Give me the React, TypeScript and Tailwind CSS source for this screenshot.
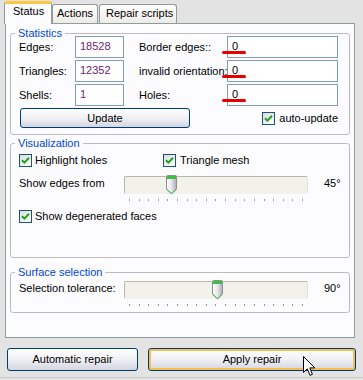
import React from 'react';

const CheckBox = () => (
  <span className="w-[13px] h-[13px] shrink-0 border border-[#1c5180] bg-linear-to-br from-[#dcdcd7] to-white flex items-center justify-center">
    <svg width="9" height="9" viewBox="0 0 9 9">
      <path d="M1 4.2 L3.4 6.6 L8 1.8" stroke="#21a121" strokeWidth="2" fill="none" />
    </svg>
  </span>
);

const Check = ({ label, className = '' }: { label: string; className?: string }) => (
  <div className={`flex items-center gap-[3px] whitespace-nowrap ${className}`}>
    <CheckBox />
    <span>{label}</span>
  </div>
);

const Group = ({ title, className = '', children }: { title: string; className?: string; children: React.ReactNode }) => (
  <div className={`border border-[#bdbdbd] rounded-[3px] ${className}`}>
    <div className="-mt-[7px] ml-[4px] w-fit px-[3px] bg-[#fcfcfe] text-[#0046d5]">{title}</div>
    {children}
  </div>
);

const Field = ({ value, className = '', color = 'text-black' }: { value: string; className?: string; color?: string }) => (
  <div className={`h-[22px] shrink-0 border border-[#7f9db9] bg-white pl-[4px] pt-[3px] ${color} ${className}`}>{value}</div>
);

const Thumb = () => (
  <svg width="11" height="20" viewBox="0 0 11 20">
    <defs>
      <linearGradient id="tg" x1="0" x2="1" y1="0" y2="0">
        <stop offset="0" stopColor="#ffffff" />
        <stop offset="0.5" stopColor="#e6e6ec" />
        <stop offset="1" stopColor="#a9a9b4" />
      </linearGradient>
    </defs>
    <path d="M1.5 0.5 H9.5 Q10.5 0.5 10.5 1.5 V14 L5.5 19 L0.5 14 V1.5 Q0.5 0.5 1.5 0.5 Z" fill="url(#tg)" stroke="#8d8d96" />
    <rect x="1" y="1" width="9" height="3" fill="#3cc13c" />
    <path d="M0.8 14.2 L5.5 18.6 L10.2 14.2" stroke="#4db84d" fill="none" />
  </svg>
);

const ticks = Array.from({ length: 19 }, (_, i) => i);

const Slider = ({ thumbClass }: { thumbClass: string }) => (
  <div className="w-[184px] shrink-0">
    <div className="relative h-[18px] rounded-[2px] border border-t-[#b9b8ad] border-l-[#b9b8ad] border-r-[#e2e1d8] border-b-[#f3f2ea] bg-[#f3f2ea]">
      <div className={`absolute -top-[2px] ${thumbClass}`}>
        <Thumb />
      </div>
    </div>
    <div className="mt-[5px] h-[2px] px-[5px] flex justify-between">
      {ticks.map((t) => (
        <span key={t} className="w-px h-[2px] bg-[#9a9a9a]" />
      ))}
    </div>
  </div>
);

const XpButton = ({ label, className = '', focus = false }: { label: string; className?: string; focus?: boolean }) => (
  <div
    className={`rounded-[3px] border border-[#003c74] bg-linear-to-b from-white via-[#f1f1f5] to-[#d4d4e0] flex items-center justify-center ${
      focus ? 'shadow-[inset_0_0_0_2px_#f6bd52]' : ''
    } ${className}`}
  >
    {label}
  </div>
);

export default function App() {
  return (
    <div className="relative w-[363px] h-[380px] overflow-hidden bg-[#e3e3e3] font-['Liberation_Sans',Arial,sans-serif] text-[11px] leading-[13px] text-black">
      {/* Tabs */}
      <div className="flex items-end h-[23px] pl-[4px]">
        <div className="relative z-10 -mb-px h-[23px] w-[48px] rounded-t-[3px] border-x border-[#919b9c] border-t-[3px] border-t-[#ffc83c] bg-[#fcfcfe] pt-[1px] pl-[8px]">
          Status
        </div>
        <div className="h-[19px] w-[46px] rounded-t-[3px] border-x border-t border-[#919b9c] bg-linear-to-b from-white to-[#ecebe6] pt-[2px] pl-[4px]">
          Actions
        </div>
        <div className="ml-[1px] h-[19px] w-[78px] rounded-t-[3px] border-x border-t border-[#919b9c] bg-linear-to-b from-white to-[#ecebe6] pt-[2px] pl-[6px]">
          Repair scripts
        </div>
      </div>

      {/* Panel */}
      <div className="ml-[5px] w-[350px] h-[315px] border border-[#919b9c] bg-[#fcfcfe] px-[4px] flex flex-col">
        <Group title="Statistics" className="mt-[9px] pb-[6px]">
          <div className="-mt-[4px] pl-[8px] flex flex-col gap-[2px]">
            <div className="flex items-center whitespace-nowrap">
              <span className="w-[56px]">Edges:</span>
              <Field value="18528" className="w-[49px]" color="text-[#6e1d6e]" />
              <span className="ml-[15px] w-[88px]">Border edges::</span>
              <Field value="0" className="w-[111px]" />
            </div>
            <div className="flex items-center whitespace-nowrap">
              <span className="w-[56px]">Triangles:</span>
              <Field value="12352" className="w-[49px]" color="text-[#6e1d6e]" />
              <span className="ml-[15px] w-[88px]">invalid orientation:</span>
              <Field value="0" className="w-[111px]" />
            </div>
            <div className="flex items-center whitespace-nowrap">
              <span className="w-[56px]">Shells:</span>
              <Field value="1" className="w-[49px]" color="text-[#6e1d6e]" />
              <span className="ml-[15px] w-[88px]">Holes:</span>
              <Field value="0" className="w-[111px]" />
            </div>
            <div className="flex items-center pr-[11px]">
              <XpButton label="Update" className="ml-[1px] w-[170px] h-[20px]" />
              <Check label="auto-update" className="ml-auto gap-[4px]" />
            </div>
          </div>
        </Group>

        <Group title="Visualization" className="mt-[8px] pb-[34px]">
          <div className="pl-[8px]">
            <div className="mt-[4px] flex items-center">
              <Check label="Highlight holes" className="w-[144px]" />
              <Check label="Triangle mesh" className="gap-[4px]" />
            </div>
            <div className="mt-[9px] flex items-start">
              <span className="w-[105px] pt-[1px]">Show edges from</span>
              <Slider thumbClass="left-[41px]" />
              <span className="ml-[16px] pt-[1px]">45°</span>
            </div>
            <Check label="Show degenerated faces" className="mt-[9px]" />
          </div>
        </Group>

        <Group title="Surface selection" className="mt-[14px] pb-[6px]">
          <div className="pl-[8px] mt-[2px] flex items-start">
            <span className="w-[105px] pt-[1px]">Selection tolerance:</span>
            <Slider thumbClass="left-[87px]" />
            <span className="ml-[16px] pt-[1px]">90°</span>
          </div>
        </Group>
      </div>

      {/* Bottom buttons */}
      <div className="mt-[10px] pl-[7px] flex gap-[10px]">
        <XpButton label="Automatic repair" className="w-[131px] h-[23px]" />
        <XpButton label="Apply repair" className="w-[208px] h-[23px]" focus />
      </div>
      <div className="mt-[6px] h-px bg-[#c9c9c9]" />

      {/* Red annotation marks */}
      <span className="absolute left-[222px] top-[51px] w-[24px] h-[3px] rounded-full bg-[#e60000]" />
      <span className="absolute left-[222px] top-[75px] w-[24px] h-[3px] rounded-full bg-[#e60000]" />
      <span className="absolute left-[222px] top-[99px] w-[24px] h-[3px] rounded-full bg-[#e60000]" />

      {/* Mouse pointer */}
      <svg className="absolute left-[303px] top-[356px]" width="13" height="21" viewBox="0 0 13 21">
        <path d="M0.5 0.5 L0.5 16.5 L4.3 12.8 L7 19.3 L9.4 18.3 L6.8 11.9 L11.8 11.9 Z" fill="#ffffff" stroke="#000000" strokeLinejoin="round" />
      </svg>
    </div>
  );
}
